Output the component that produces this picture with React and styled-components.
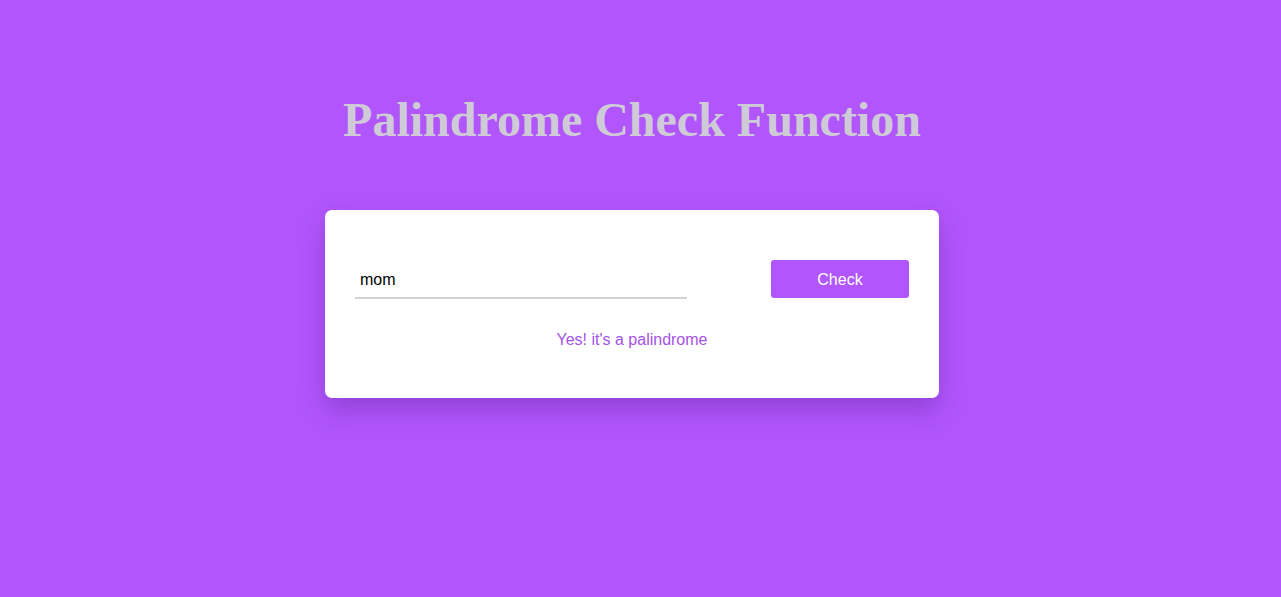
import React, {useState} from "react";
import styled, {createGlobalStyle} from "styled-components";

const GlobalStyle = createGlobalStyle`
  html, body {
    margin: 0;
    padding: 0;
    background: #b156fd;
  }
`

// right padding stands in for the scrollbar gutter of the original page
const PageStyled = styled.div`
  min-height: 597px;
  padding-right: 17px;
  display: flex;
  flex-direction: column;
  align-items: center;
  background: #b156fd;
`

const TitleStyled = styled.h1`
  margin: 92px 0 62px;
  font-family: "Liberation Serif", "Times New Roman", serif;
  font-weight: 700;
  font-size: 48px;
  line-height: 56px;
  color: #cfcbd6;
`

const CardStyled = styled.div`
  width: 614px;
  box-sizing: border-box;
  padding: 50px 30px 48px;
  background: #ffffff;
  border-radius: 7px;
  box-shadow: 0 12px 24px rgba(90, 30, 150, 0.35);
  font-family: "Liberation Sans", Arial, sans-serif;
`

const RowStyled = styled.div`
  display: flex;
  justify-content: space-between;
  align-items: flex-start;
`

const InputStyled = styled.input`
  width: 332px;
  height: 39px;
  box-sizing: border-box;
  padding: 2px 5px 0;
  border: none;
  border-bottom: 2px solid #d3d3d3;
  outline: none;
  font-family: "Liberation Sans", Arial, sans-serif;
  font-size: 16px;
  color: #000;
  background: transparent;
`

const ButtonStyled = styled.button`
  width: 138px;
  height: 38px;
  padding: 2px 0 0;
  border: none;
  border-radius: 3px;
  background: #b156fd;
  color: #ffffff;
  font-family: "Liberation Sans", Arial, sans-serif;
  font-size: 16px;
  cursor: pointer;
`

const ResultStyled = styled.p`
  margin: 31px 0 0;
  text-align: center;
  font-size: 16px;
  line-height: 20px;
  color: ${({ok}) => ok ? '#a552e6' : '#e05252'};
`

const isPalindrome = (str) => {
    const clean = str.toLowerCase().replace(/[^a-z0-9]/g, '');
    return clean.length > 0 && clean === clean.split('').reverse().join('');
}

const App = () => {
    const [value, setValue] = useState('mom');
    const [result, setResult] = useState(isPalindrome('mom'));

    return (
        <PageStyled>
            <GlobalStyle/>
            <TitleStyled>Palindrome Check Function</TitleStyled>
            <CardStyled>
                <RowStyled>
                    <InputStyled value={value} onChange={e => setValue(e.target.value)}/>
                    <ButtonStyled onClick={() => setResult(isPalindrome(value))}>Check</ButtonStyled>
                </RowStyled>
                <ResultStyled ok={result}>
                    {result ? "Yes! it's a palindrome" : "No! it's not a palindrome"}
                </ResultStyled>
            </CardStyled>
        </PageStyled>
    )
}

export default App;
